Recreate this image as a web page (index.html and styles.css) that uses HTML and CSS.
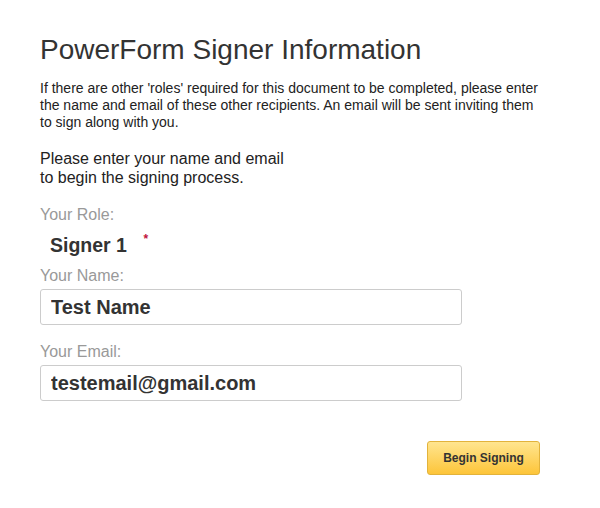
FILE: index.html
```html
<!DOCTYPE html>
<html lang="en">
<head>
  <meta charset="UTF-8">
  <title>PowerForm Signer Information</title>
  <link rel="stylesheet" href="styles.css">
</head>
<body>
  <div class="container">
    <h1>PowerForm Signer Information</h1>

    <p class="intro">If there are other 'roles' required for this document to be completed, please enter the name and email of these other recipients. An email will be sent inviting them to sign along with you.</p>

    <p class="lead">Please enter your name and email<br>to begin the signing process.</p>

    <label class="field-label">Your Role:</label>
    <div class="role">Signer 1 <span class="required">*</span></div>

    <label class="field-label" for="name">Your Name:</label>
    <input type="text" id="name" class="field" value="Test Name">

    <label class="field-label" for="email">Your Email:</label>
    <input type="text" id="email" class="field" value="testemail@gmail.com">

    <div class="actions">
      <button class="begin">Begin Signing</button>
    </div>
  </div>
</body>
</html>
```

FILE: styles.css
```css
body {
  margin: 0;
  font-family: "Liberation Sans", Arial, sans-serif;
  color: #333;
  background: #fff;
}

.container {
  width: 500px;
  padding: 34px 0 0 40px;
}

h1 {
  font-size: 28px;
  font-weight: normal;
  line-height: 32px;
  margin: 0 0 14px 0;
}

.intro {
  font-size: 14px;
  line-height: 17px;
  margin: 0 0 18px 0;
  color: #222;
}

.lead {
  font-size: 16px;
  line-height: 19px;
  margin: 0 0 18px 0;
  color: #222;
}

.field-label {
  display: block;
  font-size: 16px;
  line-height: 20px;
  color: #999;
}

.role {
  font-size: 19.5px;
  font-weight: bold;
  line-height: 24px;
  padding: 8px 0 0 10px;
  margin-bottom: 9px;
  color: #333;
}

.required {
  color: #c0143c;
  font-size: 12px;
  line-height: 12px;
  vertical-align: top;
  margin-left: 11px;
}

.field {
  display: block;
  box-sizing: border-box;
  width: 422px;
  height: 36px;
  margin: 3px 0 17px 0;
  padding: 0 10px;
  font-family: "Liberation Sans", Arial, sans-serif;
  font-size: 20px;
  font-weight: bold;
  color: #333;
  border: 1px solid #ccc;
  border-radius: 3px;
}

.actions {
  display: flex;
  justify-content: flex-end;
  padding-top: 23px;
}

.begin {
  width: 113px;
  height: 34px;
  font-family: "Liberation Sans", Arial, sans-serif;
  font-size: 12px;
  font-weight: bold;
  color: #333;
  background: linear-gradient(#ffe58f, #fdc53a);
  border: 1px solid #e2b33c;
  border-radius: 3px;
  cursor: pointer;
}
```
